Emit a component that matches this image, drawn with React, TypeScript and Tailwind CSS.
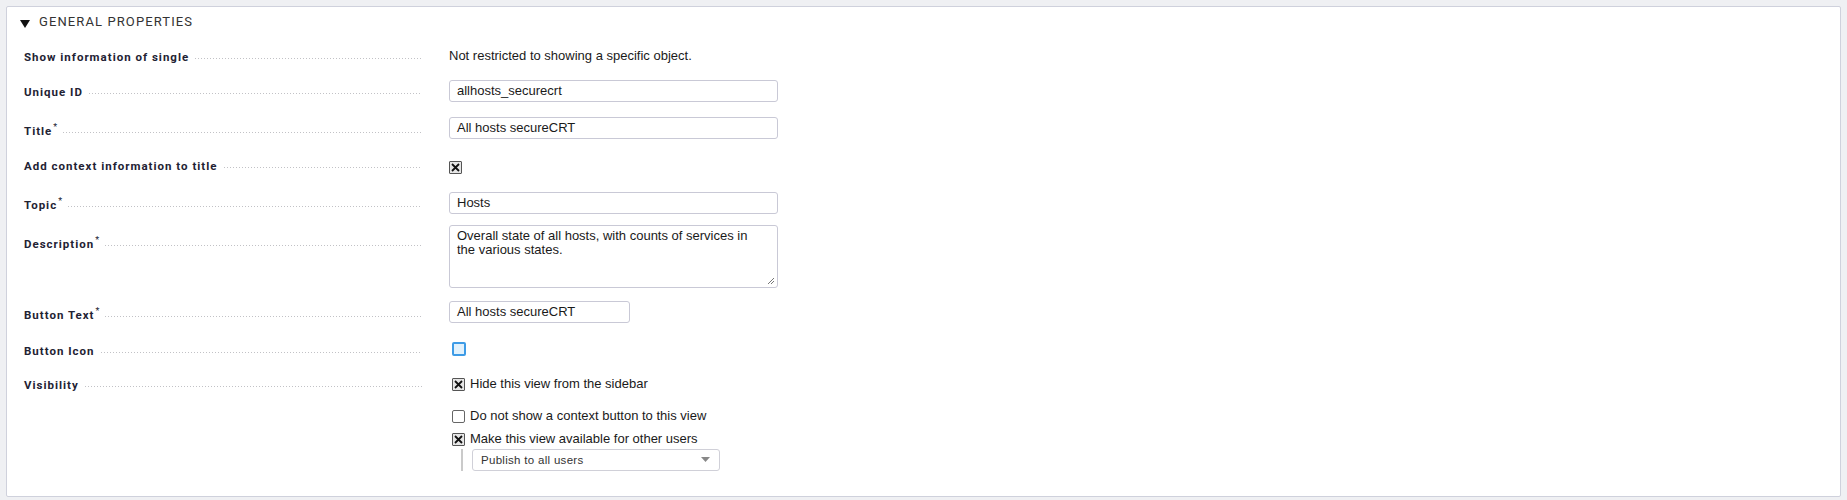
import React from "react";

const labelFont = { fontFamily: "Roboto, 'Liberation Sans', sans-serif" };

function Label(props: { text: string; req?: boolean; pt: string }): JSX.Element {
  return (
    <div className={`flex w-[398px] shrink-0 items-baseline ${props.pt}`}>
      <span
        className="whitespace-nowrap text-[11.5px] leading-[14px] font-bold tracking-[1px] text-[#222233]"
        style={labelFont}
      >
        {props.text}
        {props.req && (
          <span className="relative -top-[5px] ml-[1px] text-[9px] font-normal tracking-normal">
            *
          </span>
        )}
      </span>
      <span className="relative -top-[2px] ml-[6px] h-[1px] flex-1 bg-[linear-gradient(to_right,#c2c2c6_1px,transparent_1px)] bg-[length:3px_1px]" />
    </div>
  );
}

function Checked(props: { className?: string }): JSX.Element {
  return (
    <span
      className={`flex h-[13px] w-[13px] shrink-0 items-center justify-center rounded-[1px] border border-[#555] bg-[#e6e6e6] ${props.className ?? ""}`}
    >
      <svg width="9" height="9" viewBox="0 0 9 9">
        <path d="M1 1 L8 8 M8 1 L1 8" stroke="#111" strokeWidth="1.8" />
      </svg>
    </span>
  );
}

function TextInput(props: { value: string; w: string }): JSX.Element {
  return (
    <div
      className={`flex h-[22px] ${props.w} items-center rounded-[3px] border border-[#c9c9d6] bg-white pl-[7px] text-[13px] text-[#1a1a1a]`}
    >
      {props.value}
    </div>
  );
}

export default function App(): JSX.Element {
  return (
    <div
      className="h-[500px] w-full bg-[#eff0f3] p-[6px] pb-[3px]"
      style={{ fontFamily: "'Liberation Sans', Arial, sans-serif" }}
    >
      <div className="h-[491px] rounded-[2px] border border-[#cfd1dc] bg-white">
        {/* header */}
        <div className="flex h-[30px] items-center pl-[13px]">
          <svg width="10" height="9" viewBox="0 0 10 9" className="mt-[2px]">
            <polygon points="0,1 10,1 5,9" fill="#111" />
          </svg>
          <span
            className="ml-[9px] text-[13px] tracking-[1.1px] text-[#333]"
            style={labelFont}
          >
            GENERAL PROPERTIES
          </span>
        </div>

        <div className="flex flex-col pl-[17px] pt-[12px]">
          <div className="flex h-[31px]">
            <Label text="Show information of single" pt="pt-[1px]" />
            <div className="ml-[27px] text-[13px] leading-[14px] text-[#1a1a1a]">
              Not restricted to showing a specific object.
            </div>
          </div>

          <div className="flex h-[37px]">
            <Label text="Unique ID" pt="pt-[5px]" />
            <div className="ml-[27px]">
              <TextInput value="allhosts_securecrt" w="w-[329px]" />
            </div>
          </div>

          <div className="flex h-[40px]">
            <Label text="Title" req pt="pt-[7px]" />
            <div className="ml-[27px]">
              <TextInput value="All hosts secureCRT" w="w-[329px]" />
            </div>
          </div>

          <div className="flex h-[35px]">
            <Label text="Add context information to title" pt="pt-[2px]" />
            <div className="ml-[27px] pt-[4px]">
              <Checked />
            </div>
          </div>

          <div className="flex h-[33px]">
            <Label text="Topic" req pt="pt-[6px]" />
            <div className="ml-[27px]">
              <TextInput value="Hosts" w="w-[329px]" />
            </div>
          </div>

          <div className="flex h-[76px]">
            <Label text="Description" req pt="pt-[12px]" />
            <div className="ml-[27px]">
              <div className="relative h-[63px] w-[329px] rounded-[3px] border border-[#c9c9d6] bg-white pl-[7px] pt-[3px] text-[13px] leading-[14px] text-[#1a1a1a]">
                Overall state of all hosts, with counts of services in
                <br />
                the various states.
                <svg
                  width="8"
                  height="8"
                  viewBox="0 0 8 8"
                  className="absolute bottom-[2px] right-[2px]"
                >
                  <path d="M7 1 L1 7 M7 4 L4 7" stroke="#777" strokeWidth="1" />
                </svg>
              </div>
            </div>
          </div>

          <div className="flex h-[41px]">
            <Label text="Button Text" req pt="pt-[7px]" />
            <div className="ml-[27px]">
              <TextInput value="All hosts secureCRT" w="w-[181px]" />
            </div>
          </div>

          <div className="flex h-[35px]">
            <Label text="Button Icon" pt="pt-[2px]" />
            <div className="ml-[30px]">
              <span className="block h-[14px] w-[14px] rounded-[2px] border-2 border-[#3d9be6] bg-[#e1f1fc]" />
            </div>
          </div>

          <div className="flex">
            <Label text="Visibility" pt="pt-[1px]" />
            <div className="ml-[30px] flex flex-col text-[13px] leading-[14px] text-[#1a1a1a]">
              <div className="mt-[0px] flex items-center gap-[5px]">
                <Checked />
                <span>Hide this view from the sidebar</span>
              </div>
              <div className="mt-[18px] flex items-center gap-[5px]">
                <span className="h-[13px] w-[13px] shrink-0 rounded-[2px] border border-[#666] bg-white" />
                <span>Do not show a context button to this view</span>
              </div>
              <div className="mt-[9px] flex items-center gap-[5px]">
                <Checked />
                <span>Make this view available for other users</span>
              </div>
              <div className="mt-[3px] flex">
                <span className="ml-[9px] h-[22px] w-[2px] bg-[#cacaca]" />
                <div className="ml-[9px] flex h-[22px] w-[248px] items-center justify-between rounded-[3px] border border-[#d0d0d8] bg-white pl-[8px] pr-[9px] text-[11.5px] tracking-[0.3px] text-[#333]">
                  <span>Publish to all users</span>
                  <svg width="9" height="6" viewBox="0 0 9 6">
                    <polygon points="0,0 9,0 4.5,5" fill="#888" />
                  </svg>
                </div>
              </div>
            </div>
          </div>
        </div>
      </div>
    </div>
  );
}
